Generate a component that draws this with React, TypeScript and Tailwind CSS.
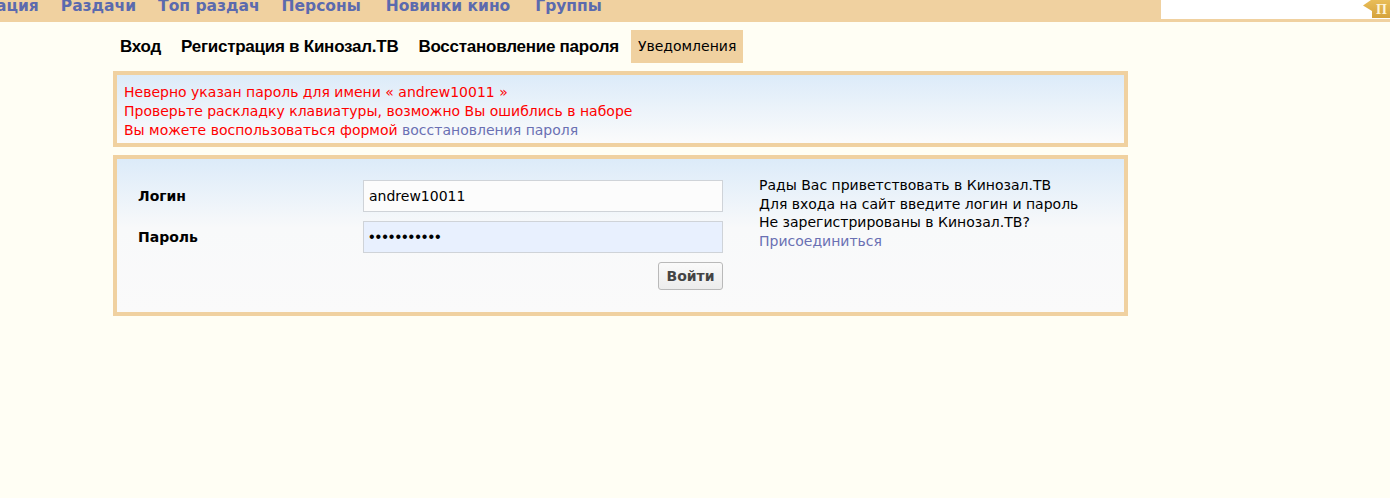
const navItems = ["ация", "Раздачи", "Топ раздач", "Персоны", "Новинки кино", "Группы"];
const subNav = ["Вход", "Регистрация в Кинозал.ТВ", "Восстановление пароля"];

function TopBar() {
  return (
    <div className="relative flex h-[22px] items-start justify-between overflow-hidden bg-[#f0d1a0]">
      <nav className="-ml-[4px] -mt-[3px] flex gap-[22px] font-['DejaVu_Sans',sans-serif] text-[15.5px] font-bold leading-[18px] text-[#5b6aae]">
        {navItems.map((item, index) => (
          <a key={item} href="#" className={index > 3 ? "ml-[3px] whitespace-nowrap" : "whitespace-nowrap"}>
            {item}
          </a>
        ))}
      </nav>
      <div className="h-[19px] w-[229px] bg-white" />
      {/* search button tab */}
      <div className="absolute right-0 top-0 flex h-[19px] w-[27px] items-start">
        <svg width="27" height="19" viewBox="0 0 27 19">
          <defs>
            <linearGradient id="g" x1="0" y1="0" x2="0" y2="1">
              <stop offset="0" stopColor="#e9bd58" />
              <stop offset="1" stopColor="#d5a23b" />
            </linearGradient>
          </defs>
          <path d="M0 5.5 L8 0 H27 V18 H9 L9 11 Z" fill="url(#g)" />
          <text x="13" y="14" fontSize="14" fontFamily="Liberation Serif, serif" fill="#fff4d6" fontWeight="bold">
            П
          </text>
        </svg>
      </div>
    </div>
  );
}

function SubNav() {
  return (
    <div className="-ml-[3px] flex h-[33px] items-stretch">
      {subNav.map((item) => (
        <a
          key={item}
          href="#"
          className="flex items-center whitespace-nowrap px-[10px] font-['Liberation_Sans',sans-serif] text-[17px] font-bold tracking-[-0.25px] text-black"
        >
          {item}
        </a>
      ))}
      <span className="ml-[2px] flex items-center bg-[#f0d1a0] px-[7px] text-black">Уведомления</span>
    </div>
  );
}

function ErrorBox() {
  return (
    <div className="mt-[8px] border-4 border-[#f0d1a0] bg-linear-to-b from-[#dcebf9] to-[#fbfbfb] px-[7px] pb-[3px] pt-[8px] leading-[19px] text-[#ff0000]">
      <p>Неверно указан пароль для имени « andrew10011 »</p>
      <p>Проверьте раскладку клавиатуры, возможно Вы ошиблись в наборе</p>
      <p>
        Вы можете воспользоваться формой{" "}
        <a href="#" className="text-[#6a70b3]">
          восстановления пароля
        </a>
      </p>
    </div>
  );
}

function LoginBox() {
  return (
    <div className="mt-[8px] flex border-4 border-[#f0d1a0] bg-linear-to-b from-[#dcebf9] via-[#f8f9fa] via-45% to-[#fafafa] pb-[22px] pl-[21px] pt-[21px]">
      <form className="grid grid-cols-[225px_360px] items-center gap-y-[9px]">
        <label className="font-bold text-black">Логин</label>
        <input
          defaultValue="andrew10011"
          className="h-[32px] border border-[#cfd3d8] bg-[#fcfcfc] px-[5px] text-black outline-none"
        />
        <label className="font-bold text-black">Пароль</label>
        <input
          type="password"
          defaultValue="andrew10011"
          className="h-[32px] border border-[#cfd3d8] bg-[#e8f0fe] px-[5px] font-['Liberation_Sans',sans-serif] text-[16px] tracking-[1px] text-black outline-none"
        />
        <div />
        <div className="flex justify-end">
          <button
            type="button"
            className="h-[28px] w-[65px] rounded-[3px] border border-[#b9b9b9] bg-linear-to-b from-[#fafafa] to-[#ececec] font-bold text-[#444]"
          >
            Войти
          </button>
        </div>
      </form>
      <div className="-mt-[4px] ml-[36px] leading-[18.7px] text-black">
        <p>Рады Вас приветствовать в Кинозал.ТВ</p>
        <p>Для входа на сайт введите логин и пароль</p>
        <p>Не зарегистрированы в Кинозал.ТВ?</p>
        <a href="#" className="text-[#6a70b3]">
          Присоединиться
        </a>
      </div>
    </div>
  );
}

export default function App() {
  return (
    <div className="min-h-[498px] bg-[#fffef4] font-['DejaVu_Sans',sans-serif] text-[14px]">
      <TopBar />
      <main className="ml-[113px] mt-[8px] w-[1015px]">
        <SubNav />
        <ErrorBox />
        <LoginBox />
      </main>
    </div>
  );
}
